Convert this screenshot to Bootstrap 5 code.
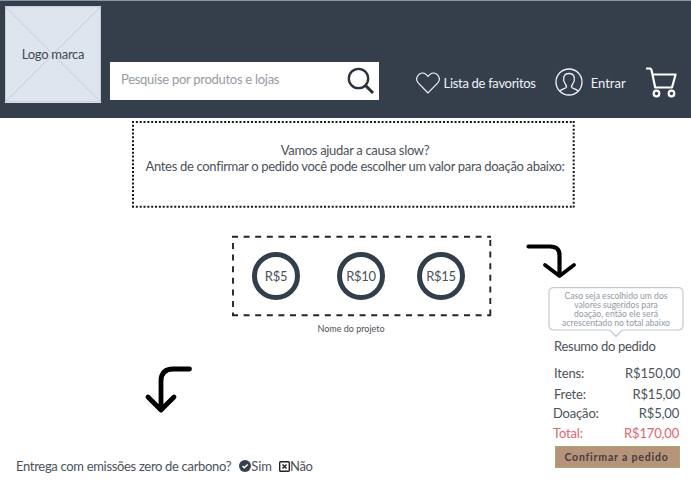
<!DOCTYPE html>
<html lang="pt-BR">
<head>
<meta charset="utf-8">
<meta name="viewport" content="width=device-width, initial-scale=1">
<title>Resumo do pedido</title>
<link href="https://cdn.jsdelivr.net/npm/bootstrap@5.3.0/dist/css/bootstrap.min.css" rel="stylesheet">
<style>
body{font-family:Lato,sans-serif;font-size:13px;line-height:16px;letter-spacing:-.28px;color:#4b5259;background:#fff;overflow:hidden;white-space:nowrap}
svg{display:block;flex:none;overflow:visible}
.topbar{height:118px;background:#353f4c;border-top:1px solid #8795a3;padding-left:5px;color:#eef2f6}
.logo-box{width:96px;height:96.5px;margin-top:5px;background:#dfe5ee;color:#3f4851}
.search-box{width:269px;height:38px;margin:61px 0 0 9px;padding:0 4px 0 11px;background:#fff;color:#959ba3}
.search-box span{margin-top:-4px}
.tools{margin:64px 0 0 37px;height:36px}
.notice{width:443px;height:87px;margin:3px 0 0 132px;padding:21px 0 0 3px;letter-spacing:-.32px}
.choices{width:259px;height:80px;margin:28px 0 0 232px;padding-left:20px}
.frame{inset:0;width:100%;height:100%}
.ring{width:48px;height:48px;border:5px solid #333e4b}
.r10{margin-left:37px}
.r15{margin-left:32px}
.left-col{width:515px}
.caption{font-size:9px;line-height:12px;letter-spacing:0;margin:7px 0 0 232px;width:238px}
.arrow-down{margin:31px 0 0 145px}
.delivery{margin:44px 0 0 16px;height:16px}
.t-del{letter-spacing:-.32px}
.wide{letter-spacing:0}
.arrow-right{margin:36px 0 0 11px}
.tip{width:136px;height:44px;margin:8px 0 0 33px;padding-top:5px;font-size:8.6px;line-height:8.9px;letter-spacing:0;color:#9299a3}
.summary{width:126px;margin-left:39px}
.s1,.s2,.s3,.s4{letter-spacing:-.18px}
.total{color:#e0656f}
.confirm{width:125px;height:22px;margin:5px 0 0 1px;padding-right:2px;background:#b6947a;border:1px solid #a9a671;color:#453e40;font-size:10.5px;line-height:20px;letter-spacing:.82px;font-weight:700}
.t-fav{margin-left:3.5px;letter-spacing:-.3px}
.ico-user{margin-left:19px}
.t-enter{margin-left:8px}
.ico-cart{margin-left:20px}
.ico-yes{margin-left:8px}
.ico-no{margin-left:7px}
.t-title{margin-top:7px}
.s1{margin-top:11px}
.s2{margin-top:5px}
.s3{margin:3px 1px 0 -1px}
.s4{margin:4px 1px 0 -1px}
</style>
</head>
<body>
<header class="topbar d-flex align-items-start">
  <div class="logo-box position-relative d-flex align-items-center justify-content-center">
    <svg class="frame position-absolute" viewBox="0 0 96 96"><path d="M0 0 96 96M96 0 0 96M.5.5h95v95H.5z" fill="none" stroke="#c5ccd6"/></svg>
    <span class="position-relative">Logo marca</span>
  </div>
  <div class="search-box d-flex align-items-center justify-content-between">
    <span>Pesquise por produtos e lojas</span>
    <svg width="28" height="28" viewBox="0 0 28 28" fill="none" stroke="#29323d"><circle cx="11.5" cy="11.5" r="9.7" stroke-width="2.3"/><path d="m18.5 18.5 7.5 7.5" stroke-width="3"/></svg>
  </div>
  <div class="tools d-flex align-items-center">
    <svg width="24" height="22" viewBox="0 0 24 22" fill="none" stroke="#eef2f6" stroke-width="1.2"><path d="M12 21 2.4 11.2C-2.4 5.8 4.5-2 10 2.4l2 2 2-2C19.5-2 26.4 5.8 21.6 11.2Z"/></svg>
    <span class="t-fav">Lista de favoritos</span>
    <svg class="ico-user" width="28" height="28" viewBox="0 0 28 28" fill="none" stroke="#eef2f6" stroke-width="1.3"><circle cx="14" cy="13" r="13"/><path d="M5 22c1.5-2.2 5.5-2 6.3-3.7.5-1.2-.2-2.3-1-3.3C7.5 11 7.8 4.5 14 4.5S20.5 11 17.7 15c-.8 1-1.5 2.1-1 3.3C17.5 20 21.5 19.8 23 22"/></svg>
    <span class="t-enter wide">Entrar</span>
    <svg class="ico-cart" width="31" height="32" viewBox="0 0 31 32" fill="none" stroke="#fff" stroke-width="2.2"><path d="M0 1.5h4.5l1 1.5L9.2 20.5H26L29.6 7.5H6.5" stroke-linejoin="round"/><circle cx="10.5" cy="26.5" r="2.8"/><circle cx="25.5" cy="26.5" r="2.8"/></svg>
  </div>
</header>
<main>
  <section class="notice position-relative text-center">
    <svg class="frame position-absolute" viewBox="0 0 443 87"><path d="M0 1h442M0 85.7h442M1 0v87M441.7 0v87" fill="none" stroke="#15181c" stroke-width="2" stroke-dasharray="2 1.84"/></svg>
    <div>Vamos ajudar a causa slow?</div>
    <div>Antes de confirmar o pedido você pode escolher um valor para doação abaixo:</div>
  </section>
  <div class="d-flex">
    <div class="left-col">
      <div class="choices position-relative d-flex align-items-center">
        <svg class="frame position-absolute" viewBox="0 0 259 80"><path d="M0 .8h259M1 7v73M258.3 4v76M0 79.3h259" fill="none" stroke="#20262d" stroke-width="1.9" stroke-dasharray="6 5.6"/></svg>
        <div class="ring rounded-circle d-flex align-items-center justify-content-center"><span>R$5</span></div>
        <div class="ring r10 rounded-circle d-flex align-items-center justify-content-center"><span>R$10</span></div>
        <div class="ring r15 rounded-circle d-flex align-items-center justify-content-center"><span>R$15</span></div>
      </div>
      <div class="caption text-center">Nome do projeto</div>
      <svg class="arrow-down" width="48" height="48" viewBox="0 0 48 48" fill="none" stroke="#000" stroke-width="4.8" stroke-linecap="round" stroke-linejoin="round"><path d="M44.5 3H28Q16 3 16 15V43M3 31 16 44 29 31"/></svg>
      <div class="delivery d-flex align-items-center">
        <span class="t-del">Entrega com emissões zero de carbono?</span>
        <svg class="ico-yes" width="12" height="12" viewBox="0 0 12 12"><circle cx="6" cy="6" r="6" fill="#35404c"/><path d="m3.5 6 1.8 1.8L8.7 4.4" fill="none" stroke="#fff" stroke-width="1.4"/></svg>
        <span class="wide">Sim</span>
        <svg class="ico-no" width="11" height="11" viewBox="0 0 11 11" fill="none" stroke="#20242a"><rect x=".7" y=".7" width="9.6" height="9.6" rx="1" stroke-width="1.4"/><path d="m3.5 3.5 4 4m0-4-4 4" stroke-width="1.5"/></svg>
        <span>Não</span>
      </div>
    </div>
    <aside>
      <svg class="arrow-right" width="50" height="35" viewBox="0 0 50 35" fill="none" stroke="#000" stroke-linecap="round" stroke-linejoin="round"><path d="M2.5 2.5H24Q33.5 2.5 33.5 11V31" stroke-width="4.2"/><path d="m19 21 14.5 11L48 21" stroke-width="3.8"/></svg>
      <div class="tip position-relative text-center">
        <svg class="frame position-absolute" viewBox="0 0 136 44"><path d="M6 .7H130q5 0 5 5V38q0 5-5 5H74l-6 6.5L62 43H6q-5 0-5-5V5.7q0-5 5-5Z" fill="#fff" stroke="#c3c9d0" stroke-width="1.2"/></svg>
        <div class="position-relative">Caso seja escolhido um dos<br>valores sugeridos para<br>doação, então ele será<br>acrescentado no total abaixo</div>
      </div>
      <div class="summary">
        <div class="t-title">Resumo do pedido</div>
        <div class="s1 d-flex justify-content-between"><span>Itens:</span><span>R$150,00</span></div>
        <div class="s2 d-flex justify-content-between"><span>Frete:</span><span>R$15,00</span></div>
        <div class="s3 d-flex justify-content-between"><span>Doação:</span><span>R$5,00</span></div>
        <div class="s4 total d-flex justify-content-between"><span>Total:</span><span>R$170,00</span></div>
        <div class="confirm text-center">Confirmar a pedido</div>
      </div>
    </aside>
  </div>
</main>
<script src="https://cdn.jsdelivr.net/npm/bootstrap@5.3.0/dist/js/bootstrap.bundle.min.js"></script>
</body>
</html>
